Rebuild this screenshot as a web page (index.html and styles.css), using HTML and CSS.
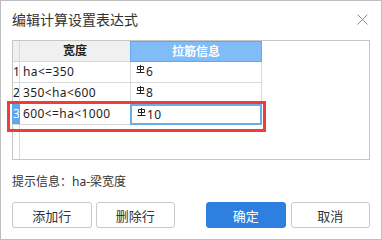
FILE: index.html
```html
<!DOCTYPE html>
<html lang="zh-CN">
<head>
<meta charset="utf-8">
<title>编辑计算设置表达式</title>
<link rel="stylesheet" href="styles.css">
</head>
<body>
<div class="dialog">
  <div class="titlebar">
    <span class="title">编辑计算设置表达式</span>
    <svg class="close" viewBox="0 0 11 11" aria-label="关闭"><path d="M0.5 0.5L10.5 10.5M10.5 0.5L0.5 10.5"/></svg>
  </div>
  <div class="tablebox">
    <div class="grid">
      <div class="c num hd"></div>
      <div class="c hd">宽度</div>
      <div class="c hd sel">拉筋信息</div>

      <div class="c num">1</div>
      <div class="c txt">ha&lt;=350</div>
      <div class="c txt bar"><svg class="gang" viewBox="0 0 9 8"><path d="M1.5 1.5h6v3h-6zM4.5 0v7M0.5 7.5h8"/></svg>6</div>

      <div class="c num">2</div>
      <div class="c txt">350&lt;ha&lt;600</div>
      <div class="c txt bar"><svg class="gang" viewBox="0 0 9 8"><path d="M1.5 1.5h6v3h-6zM4.5 0v7M0.5 7.5h8"/></svg>8</div>

      <div class="c num act">3</div>
      <div class="c txt">600&lt;=ha&lt;1000</div>
      <div class="c txt bar edit"><svg class="gang" viewBox="0 0 9 8"><path d="M1.5 1.5h6v3h-6zM4.5 0v7M0.5 7.5h8"/></svg>10</div>

      <div class="c num fill"></div>
    </div>
  </div>
  <p class="hint">提示信息：ha-梁宽度</p>
  <div class="actions">
    <button class="btn">添加行</button>
    <button class="btn b2">删除行</button>
    <button class="btn b3 primary">确定</button>
    <button class="btn b4">取消</button>
  </div>
  <div class="mark"></div>
</div>
</body>
</html>
```
FILE: styles.css
```css
body {
  margin: 0;
  font-family: "Noto Sans", "Noto Sans CJK SC", sans-serif;
}

.dialog {
  position: relative;
  box-sizing: border-box;
  width: 382px;
  height: 240px;
  border: 1px solid #bebebe;
  padding: 0 11px;
  background: #fff;
  color: #333;
}

.titlebar {
  display: flex;
  align-items: center;
  justify-content: space-between;
  height: 37px;
  margin-bottom: 2px;
}

.title {
  font-size: 14px;
  line-height: 18px;
  color: #333;
}

.close {
  width: 11px;
  height: 11px;
  margin-right: 2px;
  fill: none;
  stroke: #8c8c8c;
  stroke-width: 1;
}

.tablebox {
  box-sizing: border-box;
  height: 120px;
  border: 1px solid #c6c6c6;
}

.grid {
  display: grid;
  grid-template-columns: 7px 111px 131px;
  grid-template-rows: repeat(4, 21px) 1fr;
  height: 100%;
  font-size: 12px;
}

.c {
  box-sizing: border-box;
  border-right: 1px solid #d9d9d9;
  border-bottom: 1px solid #d9d9d9;
  line-height: 20px;
  white-space: nowrap;
  overflow: hidden;
}

.hd {
  background: #f0f0f0;
  text-align: center;
  font-weight: 700;
  color: #222;
}

.sel {
  background: #80bcf8;
  color: #fff;
  border: 1px solid #62a6ec;
  margin-left: -1px;
  line-height: 19px;
}

.num {
  color: #222;
}

.txt {
  padding-left: 3px;
  color: #1e1e1e;
  letter-spacing: 0.4px;
}

.bar {
  padding-left: 5px;
}

.gang {
  width: 9px;
  height: 8px;
  margin-right: 1px;
  vertical-align: 3px;
  fill: none;
  stroke: #222;
  stroke-width: 1;
}

.act {
  background: #5ea8f0;
  color: #fff;
  margin-left: -1px;
  padding-left: 1px;
  border-right-color: #5ea8f0;
}

.edit {
  border: 2px solid #6aaee8;
  margin-left: -1px;
  padding-left: 5px;
  line-height: 17px;
}

.fill {
  border-bottom: none;
}

.hint {
  margin: 14px 0 0;
  font-size: 12px;
  line-height: 16px;
  color: #333;
}

.actions {
  display: flex;
  margin-top: 12px;
}

.btn {
  box-sizing: border-box;
  width: 80px;
  height: 26px;
  padding: 0;
  border: 1px solid #c9c9c9;
  border-radius: 3px;
  background: #fff;
  color: #333;
  font: 13px "Noto Sans", "Noto Sans CJK SC", sans-serif;
}

.b2 { margin-left: 4px; }
.b3 { margin-left: 31px; }
.b4 { margin-left: 5px; }

.primary {
  background: #2e80e0;
  border-color: #2e80e0;
  color: #fff;
}

.mark {
  position: absolute;
  left: 6px;
  top: 100px;
  width: 259px;
  height: 31px;
  box-sizing: border-box;
  border: 3px solid #ef3d3d;
}
```
